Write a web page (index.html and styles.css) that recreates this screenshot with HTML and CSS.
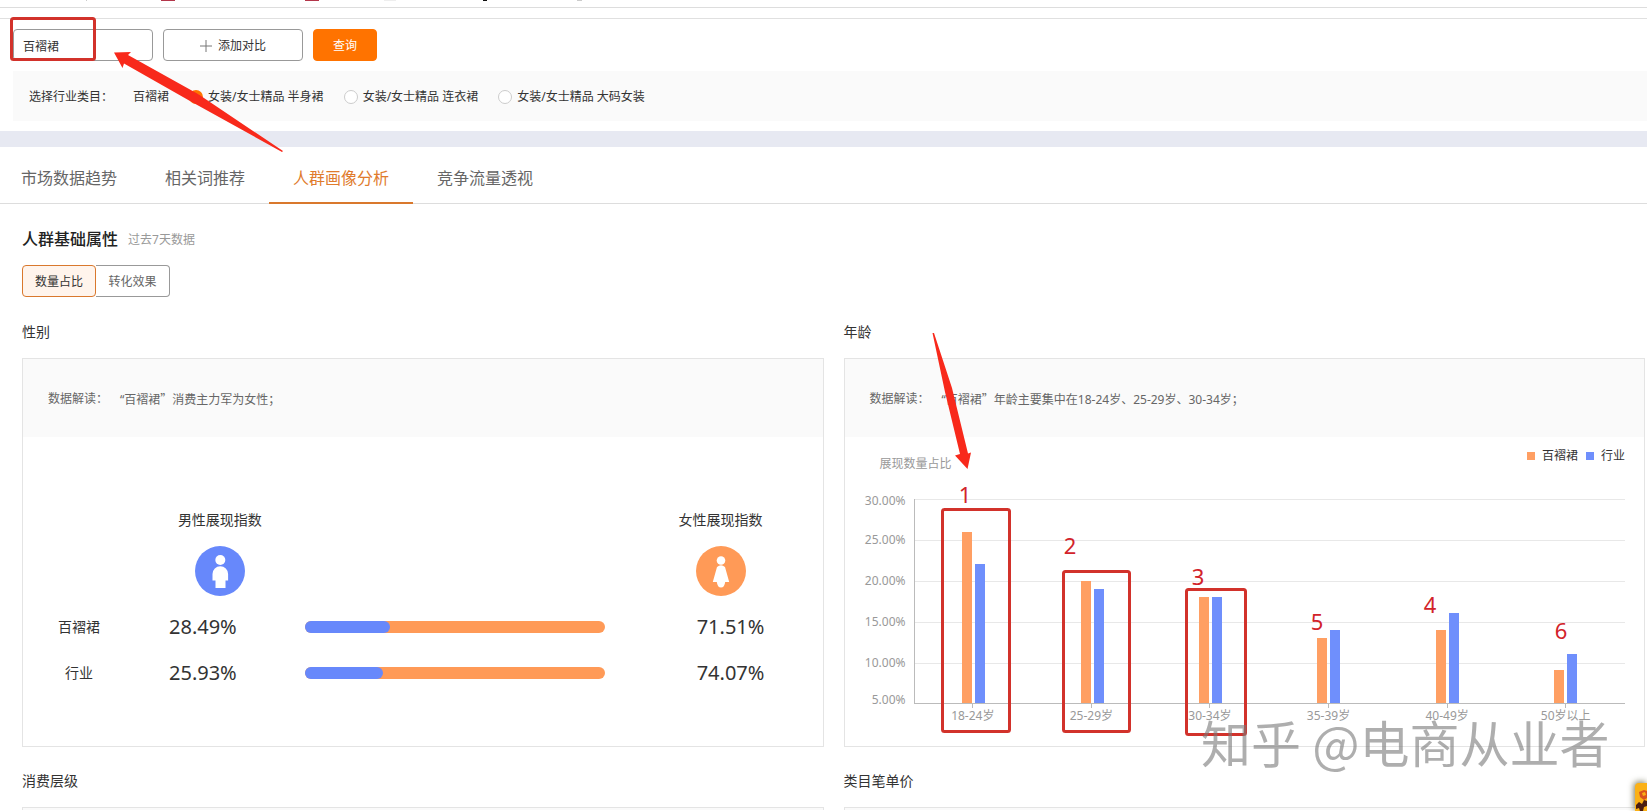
FILE: index.html
```html
<!DOCTYPE html>
<html lang="zh-CN">
<head>
<meta charset="utf-8">
<meta name="viewport" content="width=device-width, initial-scale=1">
<title>人群画像分析</title>
<link rel="stylesheet" href="styles.css">
</head>
<body>
<div class="topbar" aria-hidden="true">
  <svg width="600" height="2" viewBox="0 0 600 2">
    <path fill="#b3364a" d="M161 0h14v1h-14zM305 0h14v1h-14z"/>
    <path fill="#111" d="M483 0h4v1h-4z"/>
    <path fill="#ccc" d="M86 0h1v1h-1zM577 0h5v1h-5z"/>
    <path fill="#eee" d="M384 0h12v1h-12z"/>
  </svg>
</div>

<form class="search" onsubmit="return false">
  <div class="search-row">
    <input class="field" type="text" value="百褶裙" aria-label="关键词">
    <button class="btn btn-add" type="button">
      <svg width="12" height="12" viewBox="0 0 12 12" aria-hidden="true"><path d="M6 0v12M0 6h12" stroke="#777" fill="none"/></svg>
      添加对比
    </button>
    <button class="btn btn-primary" type="submit">查询</button>
  </div>
  <div class="category">
    <span class="category-title">选择行业类目：</span>
    <span class="category-word">百褶裙</span>
    <label class="choice"><input type="radio" name="cat" checked>女装/女士精品 半身裙</label>
    <label class="choice"><input type="radio" name="cat">女装/女士精品 连衣裙</label>
    <label class="choice"><input type="radio" name="cat">女装/女士精品 大码女装</label>
  </div>
</form>

<nav class="tabs">
  <a class="tab" href="#">市场数据趋势</a>
  <a class="tab" href="#">相关词推荐</a>
  <a class="tab tab-active" href="#">人群画像分析</a>
  <a class="tab" href="#">竞争流量透视</a>
</nav>

<main class="content">
  <header class="section-head">
    <h1>人群基础属性</h1>
    <span>过去7天数据</span>
  </header>
  <div class="switch">
    <button class="switch-item switch-on" type="button">数量占比</button>
    <button class="switch-item" type="button">转化效果</button>
  </div>

  <div class="columns">
    <section class="block">
      <h2>性别</h2>
      <div class="card">
        <p class="insight"><span>数据解读：</span><span>“百褶裙<b>”</b>消费主力军为女性；</span></p>
        <div class="gender">
          <div class="gender-head gender-male">
            <span>男性展现指数</span>
            <svg width="50" height="50" viewBox="0 0 50 50" aria-hidden="true">
              <circle cx="25" cy="25" r="25" fill="#6788fb"/>
              <circle cx="25.300" cy="14" r="5" fill="#fff"/>
              <path fill="#fff" d="M17.500 34.500V28a7.800 7.800 0 0 1 15.600 0v6.500h-2.600V42h-10v-7.500z"/>
            </svg>
          </div>
          <div class="gender-head gender-female">
            <span>女性展现指数</span>
            <svg width="50" height="50" viewBox="0 0 50 50" aria-hidden="true">
              <circle cx="25" cy="25" r="25" fill="#ff9a57"/>
              <circle cx="25" cy="14.500" r="4.300" fill="#fff"/>
              <path fill="#fff" d="M21 21q4-3.500 8 0l4.200 15h-4q-.7 5.500-4.200 5.500t-4.200-5.500h-4z"/>
            </svg>
          </div>
          <span class="name">百褶裙</span>
          <span class="percent">28.49%</span>
          <div class="meter"><i style="width:28.49%"></i></div>
          <span class="percent">71.51%</span>
          <span class="name">行业</span>
          <span class="percent">25.93%</span>
          <div class="meter"><i style="width:25.93%"></i></div>
          <span class="percent">74.07%</span>
        </div>
      </div>
    </section>

    <section class="block">
      <h2>年龄</h2>
      <div class="card">
        <p class="insight"><span>数据解读：</span><span>“百褶裙<b>”</b>年龄主要集中在18-24岁、25-29岁、30-34岁；</span></p>
        <div class="chart">
          <div class="chart-top">
            <span class="chart-title">展现数量占比</span>
            <ul class="legend">
              <li><i class="key key-a"></i>百褶裙</li>
              <li><i class="key key-b"></i>行业</li>
            </ul>
          </div>
          <div class="chart-body">
            <ul class="y-axis">
              <li>30.00%</li><li>25.00%</li><li>20.00%</li><li>15.00%</li><li>10.00%</li><li>5.00%</li>
            </ul>
            <div class="plot-wrap">
              <div class="plot">
                <div class="group"><i class="bar bar-a" style="height:84%"></i><i class="bar bar-b" style="height:68%"></i></div>
                <div class="group"><i class="bar bar-a" style="height:60%"></i><i class="bar bar-b" style="height:56%"></i></div>
                <div class="group"><i class="bar bar-a" style="height:52%"></i><i class="bar bar-b" style="height:52%"></i></div>
                <div class="group"><i class="bar bar-a" style="height:32%"></i><i class="bar bar-b" style="height:36%"></i></div>
                <div class="group"><i class="bar bar-a" style="height:36%"></i><i class="bar bar-b" style="height:44%"></i></div>
                <div class="group"><i class="bar bar-a" style="height:16%"></i><i class="bar bar-b" style="height:24%"></i></div>
              </div>
              <ul class="x-axis">
                <li>18-24岁</li><li>25-29岁</li><li>30-34岁</li><li>35-39岁</li><li>40-49岁</li><li>50岁以上</li>
              </ul>
            </div>
          </div>
        </div>
      </div>
    </section>

    <section class="block">
      <h2>消费层级</h2>
      <div class="card card-next"></div>
    </section>
    <section class="block">
      <h2>类目笔单价</h2>
      <div class="card card-next"></div>
    </section>
  </div>
</main>

<svg class="marks" width="1647" height="811" viewBox="0 0 1647 811">
  <g fill="none" stroke="#d2322b" stroke-width="3">
    <rect x="11.500" y="18.500" width="83" height="41" rx="2"/>
    <rect x="942.500" y="509.500" width="67" height="222" rx="2"/>
    <rect x="1063.500" y="571.500" width="66" height="160" rx="2"/>
    <rect x="1186.500" y="589.500" width="59" height="145" rx="2"/>
  </g>
  <g fill="#f8291b">
    <path d="M114 52.500L131 52L128 55L198 94L283 151L282 152L190 101L124 63.500L122.500 68z"/>
    <path d="M967.500 469L955 455.500L960 454L945 392L932.500 333H934L952 388L968 453.500L971 452.500z"/>
  </g>
  <g class="mark-number">
    <text x="965" y="503">1</text>
    <text x="1070" y="554">2</text>
    <text x="1198" y="585">3</text>
    <text x="1317" y="630">5</text>
    <text x="1430" y="613">4</text>
    <text x="1561" y="639">6</text>
  </g>
</svg>
<div class="watermark">知乎 @电商从业者</div>
<svg class="sticker" width="12" height="28" viewBox="0 0 12 28" aria-hidden="true">
  <path fill="#fbb116" d="M0 4q0-4 4-4h8v28H0z"/>
  <path fill="#d9531e" d="M4 9l5-2 3 1v7l-3 2-4-3z"/>
  <path fill="#fbb116" d="M7 10l3-1 1 3-3 1z"/>
  <path fill="#4a1d10" d="M1 22l3-3 3 2 2-4 3 1v5l-3 1-1 4H5l-1-3-3 1z"/>
</svg>
</body>
</html>
```
FILE: styles.css
```css
* { box-sizing: border-box; }

body {
  margin: 0;
  height: 100vh;
  position: relative;
  overflow: hidden;
  background: #fff;
  color: #333;
  font: 12px/20px "Noto Sans", "Noto Sans CJK SC", sans-serif;
}

h1, h2, p, ul { margin: 0; padding: 0; font-weight: 400; }
ul { list-style: none; }
button, input { font: inherit; color: inherit; }

.topbar { height: 8px; border-bottom: 1px solid #ddd; }
.topbar svg { display: block; }

.search {
  margin-top: 10px;
  padding: 10px 0 10px 13px;
  border-top: 1px solid #e0e0e0;
}
.search-row { display: flex; gap: 10px; }
.field, .btn {
  width: 140px;
  height: 32px;
  border: 1px solid #999;
  border-radius: 4px;
  background: #fff;
}
.field { padding: 2px 9px 0; }
.btn {
  display: flex;
  align-items: center;
  justify-content: center;
  gap: 6px;
  padding: 2px 0 0;
}
.btn-primary { width: 64px; border-color: #ff7300; background: #ff7300; color: #fff; }

.category {
  display: flex;
  align-items: center;
  gap: 20px;
  height: 50px;
  margin-top: 10px;
  padding: 2px 0 0 16px;
  background: #fafafa;
}
.choice { display: flex; align-items: center; gap: 5px; white-space: pre; }
.choice input {
  appearance: none;
  width: 14px;
  height: 14px;
  margin: 0;
  border: 1px solid #ccc;
  border-radius: 50%;
  background: #fff;
}
.choice input:checked { border: 4px solid #ff7300; }

.tabs {
  display: flex;
  border-top: 16px solid #e7e9f2;
  border-bottom: 1px solid #ddd;
}
.tab {
  padding: 19px 24px 12px;
  margin-bottom: -1px;
  border-bottom: 2px solid transparent;
  color: #666;
  font-size: 16px;
  line-height: 24px;
  text-decoration: none;
}
.tab:first-child { padding-left: 21px; }
.tab-active { border-color: #d9782d; color: #e07b2c; }

.content { padding: 22px 2px 0 22px; }
.section-head { display: flex; align-items: center; gap: 10px; line-height: 24px; }
.section-head h1 { font-size: 16px; font-weight: 500; color: #222; }
.section-head span { padding-top: 2px; color: #999; }

.switch { display: flex; margin-top: 13px; }
.switch-item {
  width: 74px;
  height: 32px;
  padding: 2px 0 0;
  border: 1px solid #999;
  border-left: 0;
  border-radius: 0 4px 4px 0;
  background: #fff;
  color: #666;
}
.switch-on {
  border: 1px solid #d9782d;
  border-radius: 4px;
  background: #fff4ec;
  color: #333;
}

.columns {
  display: grid;
  grid-template-columns: 1fr 1fr;
  gap: 24px 20px;
  margin-top: 25px;
}
.block h2 { margin-bottom: 16px; font-size: 14px; line-height: 20px; }
.card { border: 1px solid #e4e4e4; }
.card-next { height: 3px; border-bottom: 0; background: #fafafa; }
.insight {
  display: flex;
  align-items: center;
  gap: 12px;
  height: 78px;
  padding: 2px 0 0 25px;
  background: #fafafa;
  color: #666;
}
.insight b { font-family: "Noto Sans CJK SC", sans-serif; font-weight: 400; }

.gender {
  display: grid;
  grid-template-columns: 14% 17% 46% 23%;
  align-items: center;
  height: 309px;
  padding: 73px 0 50px;
  grid-template-rows: 94px 46px 46px;
  justify-items: center;
}
.gender-head {
  display: flex;
  flex-direction: column;
  align-items: center;
  align-self: start;
  gap: 16px;
  font-size: 14px;
  white-space: nowrap;
}
.gender-male { grid-column: 2; padding-left: 34px; }
.gender-female { grid-column: 4; padding-right: 20px; }
.name { font-size: 14px; }
.percent { font-size: 20px; line-height: 28px; }
.meter {
  justify-self: stretch;
  height: 12px;
  margin: 0 34px;
  border-radius: 6px;
  background: #ff9a57;
}
.meter i { display: block; height: 12px; border-radius: 6px; background: #6788fb; }

.chart { height: 309px; padding: 9px 19px 0 17px; }
.chart-top { display: flex; justify-content: space-between; height: 53px; padding-left: 18px; }
.chart-title { padding-top: 8px; color: #999; }
.legend { display: flex; gap: 8px; }
.legend li { display: flex; align-items: center; height: 20px; }
.key { width: 8px; height: 8px; margin-right: 7px; }
.key-a, .bar-a { background: #ff9f63; }
.key-b, .bar-b { background: #6f8ffc; }

.chart-body { display: flex; color: #999; }
.y-axis { width: 52px; margin-top: -21px; padding-right: 8px; text-align: right; }
.y-axis li { height: 41px; line-height: 41px; }
.y-axis li:first-child { padding-top: 2px; }
.y-axis li:last-child { line-height: 33px; }
.plot-wrap { flex: 1; }
.plot {
  display: flex;
  height: 205px;
  border-left: 1px solid #bbb;
  border-bottom: 1px solid #bbb;
  background: repeating-linear-gradient(#e8e8e8 0 1px, transparent 1px 41px);
}
.group { flex: 1; display: flex; align-items: flex-end; justify-content: center; gap: 3px; }
.bar { width: 10px; }
.x-axis { display: flex; }
.x-axis li { flex: 1; text-align: center; line-height: 16px; }
.x-axis li::before { content: ""; display: block; width: 1px; height: 4px; margin: 0 auto; background: #bbb; }

.marks { position: absolute; left: 0; top: 0; pointer-events: none; }
.mark-number { fill: #d2232a; font-size: 22px; text-anchor: middle; }
.watermark {
  position: absolute;
  left: 1201px;
  top: 711px;
  color: rgba(120, 120, 120, 0.6);
  font-family: "Noto Sans CJK SC", sans-serif;
  font-size: 50px;
  line-height: 60px;
  white-space: nowrap;
}
.sticker {
  position: absolute;
  right: 0;
  bottom: 0;
  filter: drop-shadow(-1px -1px 3px rgba(60, 60, 20, 0.7));
}
```
